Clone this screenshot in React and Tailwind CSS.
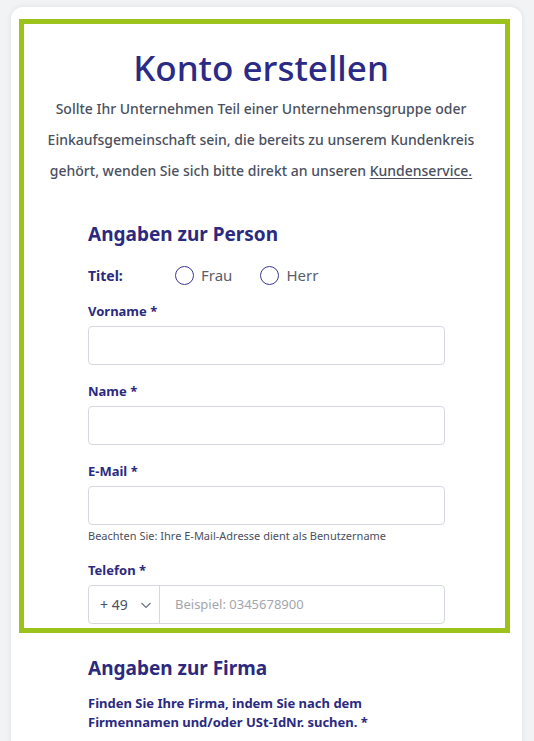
import React from "react";

function Field({ label, children }) {
  return (
    <div className="flex flex-col">
      <div className="text-[13px] leading-[20px] font-bold text-[#2b2a7f]">{label}</div>
      <div className="mt-[5px]">{children}</div>
    </div>
  );
}

function TextInput() {
  return <div className="h-[39px] w-full rounded-[4px] border border-[#d5d8de] bg-white" />;
}

function Radio({ label }) {
  return (
    <div className="flex items-center gap-[7px]">
      <span className="block h-[19px] w-[19px] rounded-full border-[1.5px] border-[#3a3796]" />
      <span className="text-[15px] leading-[24px] text-[#5a5e66]">{label}</span>
    </div>
  );
}

export default function App() {
  return (
    <div
      className="min-h-[741px] w-[534px] bg-[#f2f3f5] pt-[7px] pl-[11px] pr-[12px] overflow-hidden"
      style={{ fontFamily: "'Noto Sans', 'Open Sans', sans-serif" }}
    >
      <div className="h-[760px] rounded-t-[12px] bg-white pt-[12px] pl-[8px] pr-[12px] shadow-[0_0_6px_rgba(0,0,0,0.08)]">
        <div className="border-[5px] border-[#9bc31c] pb-[4px]">
          <div className="pl-[20px] pr-[27px] pt-[22px] text-center">
            <h1 className="text-[35px] leading-[44px] font-medium text-[#2b2a86]">Konto erstellen</h1>
            <p className="mt-[3px] text-[14px] leading-[31px] font-medium text-[#4a5060]">
              Sollte Ihr Unternehmen Teil einer Unternehmensgruppe oder Einkaufsgemeinschaft sein, die bereits zu
              unserem Kundenkreis gehört, wenden Sie sich bitte direkt an unseren{" "}
              <span className="underline underline-offset-2">Kundenservice.</span>
            </p>
          </div>
          <div className="pl-[64px] pr-[60px] pt-[34px]">
            <h2 className="text-[19px] leading-[28px] font-bold text-[#2b2a7f]">Angaben zur Person</h2>
            <div className="mt-[15px] flex h-[24px] items-center">
              <span className="w-[87px] text-[14px] font-bold text-[#2b2a7f]">Titel:</span>
              <div className="flex items-center gap-[28px]">
                <Radio label="Frau" />
                <Radio label="Herr" />
              </div>
            </div>
            <div className="mt-[14px] flex flex-col gap-[16px]">
              <Field label="Vorname *">
                <TextInput />
              </Field>
              <Field label="Name *">
                <TextInput />
              </Field>
              <div>
                <Field label="E-Mail *">
                  <TextInput />
                </Field>
                <div className="mt-[3px] text-[11px] leading-[16px] text-[#4a5060]">
                  Beachten Sie: Ihre E-Mail-Adresse dient als Benutzername
                </div>
              </div>
              <Field label="Telefon *">
                <div className="flex h-[39px] w-full rounded-[4px] border border-[#d5d8de] bg-white">
                  <div className="flex w-[71px] items-center justify-between border-r border-[#d5d8de] pl-[11px] pr-[7px]">
                    <span className="text-[14px] text-[#4a5060]">+ 49</span>
                    <svg width="12" height="12" viewBox="0 0 12 12" fill="none">
                      <path d="M1.5 4 L6 8.5 L10.5 4" stroke="#6b7280" strokeWidth="1.2" />
                    </svg>
                  </div>
                  <div className="flex items-center pl-[15px] text-[13px] text-[#a3a6ad]">Beispiel: 0345678900</div>
                </div>
              </Field>
            </div>
          </div>
        </div>
        <div className="pl-[69px] pt-[21px]">
          <h2 className="text-[19px] leading-[28px] font-bold text-[#2b2a7f]">Angaben zur Firma</h2>
          <p className="mt-[12px] text-[13px] leading-[19px] font-bold text-[#2b2a7f]">
            Finden Sie Ihre Firma, indem Sie nach dem
            <br />
            Firmennamen und/oder USt-IdNr. suchen. *
          </p>
        </div>
      </div>
    </div>
  );
}
